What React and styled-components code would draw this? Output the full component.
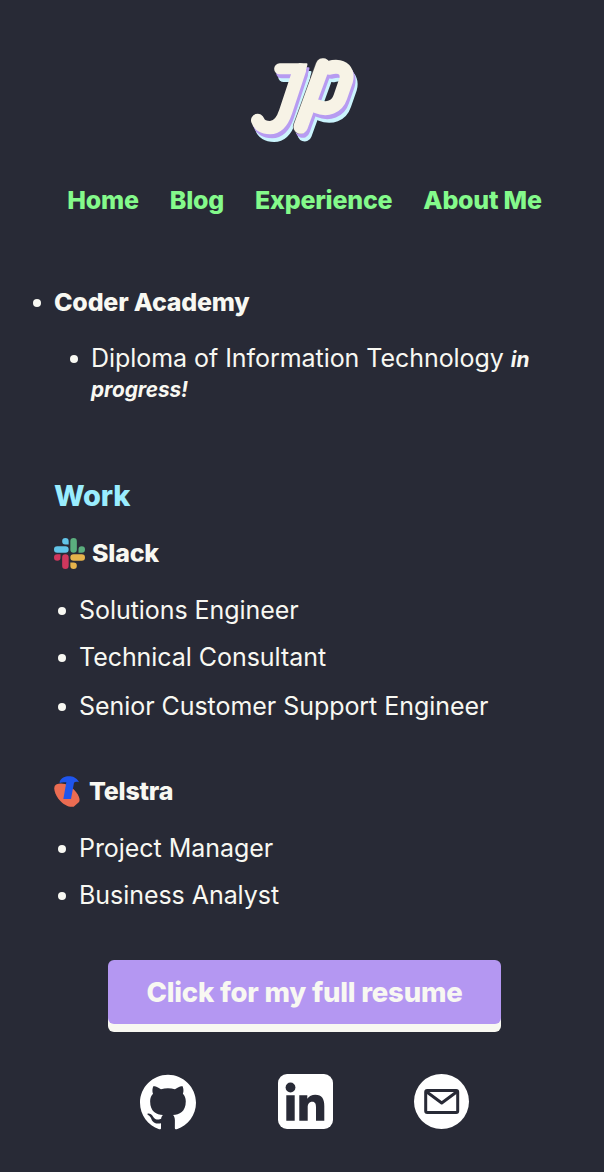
import React from "react";
import styled, { createGlobalStyle, css } from "styled-components";

const colors = {
  background: "#282a36",
  foreground: "#f8f8f2",
  green: "#84fa8b",
  cyan: "#9aedfe",
  purple: "#b497f2",
};

const heavy = css`
  font-weight: 760;
  letter-spacing: -0.22px;
`;

const GlobalStyle = createGlobalStyle`
  * { box-sizing: border-box; }
  body {
    margin: 0;
    background: ${colors.background};
    color: ${colors.foreground};
    font-family: Inter, sans-serif;
    font-size: 25px;
    line-height: 31px;
    letter-spacing: -0.05px;
  }
`;

const Page = styled.div`
  min-height: 1172px;
  display: flex;
  flex-direction: column;
`;

const Header = styled.header`
  display: flex;
  flex-direction: column;
  align-items: center;
  padding: 50px 0 0 5px;
`;

const Logo = styled.svg`
  width: 130px;
  height: 100px;
  display: block;
`;

const Nav = styled.nav`
  display: flex;
  gap: 31px;
  margin-top: 35px;
`;

const NavLink = styled.a`
  ${heavy}
  color: ${colors.green};
  text-decoration: none;
`;

const Main = styled.main`
  padding: 71px 50px 0 54px;
`;

const List = styled.ul`
  list-style: none;
  margin: ${(p) => p.$top || 0}px 0 0;
  padding: 0 0 0 ${(p) => p.$indent || 0}px;
`;

const Item = styled.li`
  margin-top: ${(p) => p.$top || 0}px;

  &::before {
    content: "";
    display: inline-block;
    width: 8px;
    height: 8px;
    margin: 0 13px 0 -21px;
    border-radius: 50%;
    background: currentColor;
    vertical-align: 4px;
  }
`;

const School = styled.strong`
  ${heavy}
`;

const Course = styled(Item)`
  line-height: 30px;
`;

const Status = styled.em`
  font-size: 20.8px;
  line-height: 0;
  font-weight: 750;
`;

const SectionTitle = styled.h2`
  ${heavy}
  margin: 75px 0 0;
  color: ${colors.cyan};
  font-size: 29px;
  line-height: 36px;
`;

const Employer = styled.h3`
  ${heavy}
  display: flex;
  align-items: center;
  gap: ${(p) => p.$gap}px;
  margin: ${(p) => p.$top}px 0 0;
  font-size: 25px;
  line-height: 31px;
`;

const BrandIcon = styled.svg`
  width: ${(p) => p.$width}px;
  height: 31px;
`;

const ResumeButton = styled.button`
  display: block;
  width: 393px;
  height: 64px;
  margin: 49px 0 0 54px;
  padding: 0;
  border: 0;
  border-radius: 6px;
  background: ${colors.purple};
  box-shadow: 0 8px 0 ${colors.foreground};
  color: ${colors.foreground};
  font: 760 27.5px/32px Inter, sans-serif;
  letter-spacing: -0.2px;
`;

const Footer = styled.footer`
  display: flex;
  justify-content: center;
  gap: 81px;
  padding: 50px 0 0 6px;
`;

const SocialLink = styled.a`
  display: flex;
  color: #fff;
`;

const SocialIcon = styled.svg`
  width: 56px;
  height: 56px;
`;

const J_BAR = "M119 56.5H182";
const J_STROKE = "M178 61L137 185C126 218 111 233 90 233C70 233 57 224 53 211";
const P_STEM = "M249 46L182 230";
const P_BOWL = "M268 53C280 50 294 49 303 53C318 59 323 74 318 92L301 141C291 171 262 182 230 169";

function Monogram({ color, dx = 0, dy = 0, outline }) {
  return (
    <g transform={`translate(${dx} ${dy})`} fill="none" strokeLinecap="round">
      <g stroke={color}>
        <path d={J_BAR} strokeWidth="33" />
        <path d={J_STROKE} strokeWidth="40" />
        <path d="M176 40H200Q204 40 202 46L194 72Z" fill={color} stroke="none" />
      </g>
      {outline && <path d={P_STEM} transform="translate(-2 0)" stroke={outline} strokeWidth="43" />}
      <g stroke={color}>
        <path d={P_STEM} strokeWidth="43" />
        <path d={P_BOWL} strokeWidth="42" />
      </g>
    </g>
  );
}

function SlackIcon() {
  return (
    <BrandIcon $width={31} viewBox="0 0 122.8 122.8" aria-hidden="true">
      <path fill="#cf375d" d="M25.8 77.6a12.9 12.9 0 1 1-12.9-12.9h12.9zM32.3 77.6a12.9 12.9 0 0 1 25.8 0v32.3a12.9 12.9 0 0 1-25.8 0z" />
      <path fill="#62c4e8" d="M45.2 25.8a12.9 12.9 0 1 1 12.9-12.9v12.9zM45.2 32.3a12.9 12.9 0 0 1 0 25.8H12.9a12.9 12.9 0 0 1 0-25.8z" />
      <path fill="#5bae7e" d="M97 45.2a12.9 12.9 0 1 1 12.9 12.9H97zM90.5 45.2a12.9 12.9 0 0 1-25.8 0V12.9a12.9 12.9 0 0 1 25.8 0z" />
      <path fill="#e6b34b" d="M77.6 97a12.9 12.9 0 1 1-12.9 12.9V97zM77.6 90.5a12.9 12.9 0 0 1 0-25.8h32.3a12.9 12.9 0 0 1 0 25.8z" />
    </BrandIcon>
  );
}

function TelstraIcon() {
  return (
    <BrandIcon $width={26} viewBox="0 0 78 93" aria-hidden="true">
      <path fill="#eb6c52" d="M8 25C-4 30 0 50 13 68C27 86 46 95 59 92L75 78C82 67 66 42 46 30C32 22 18 21 8 25Z" />
      <path fill="#1f55ed" d="M17 17C22 5 34 0 49 1C61 2 71 9 75 19C69 17 63 17 60 20L51 69H28L37 19C30 18 23 18 17 21Z" />
    </BrandIcon>
  );
}

function GithubIcon() {
  return (
    <SocialIcon viewBox="0 0 24 24" fill="currentColor">
      <path d="M12 .297c-6.63 0-12 5.373-12 12 0 5.303 3.438 9.8 8.205 11.385.6.113.82-.258.82-.577 0-.285-.01-1.04-.015-2.04-3.338.724-4.042-1.61-4.042-1.61C4.422 18.07 3.633 17.7 3.633 17.7c-1.087-.744.084-.729.084-.729 1.205.084 1.838 1.236 1.838 1.236 1.07 1.835 2.809 1.305 3.495.998.108-.776.417-1.305.76-1.605-2.665-.3-5.466-1.332-5.466-5.93 0-1.31.465-2.38 1.235-3.22-.135-.303-.54-1.523.105-3.176 0 0 1.005-.322 3.3 1.23.96-.267 1.98-.399 3-.405 1.02.006 2.04.138 3 .405 2.28-1.552 3.285-1.23 3.285-1.23.645 1.653.24 2.873.12 3.176.765.84 1.23 1.91 1.23 3.22 0 4.61-2.805 5.625-5.475 5.92.42.36.81 1.096.81 2.22 0 1.606-.015 2.896-.015 3.286 0 .315.21.69.825.57C20.565 22.092 24 17.592 24 12.297c0-6.627-5.373-12-12-12" />
    </SocialIcon>
  );
}

function LinkedinIcon() {
  return (
    <SocialIcon viewBox="0 0 56 56">
      <rect x="1" y="0" width="55" height="55" rx="9" fill="currentColor" />
      <g fill={colors.background}>
        <circle cx="13.5" cy="13.5" r="4.9" />
        <path d="M9.3 21.3H17.7V46.7H9.3ZM22.3 21.3H30.3V24.8C32.2 21.9 34.8 20.7 38.2 20.7C45.2 20.7 47.3 25.2 47.3 32V46.7H39V33.5C39 30 38.2 27.8 35.3 27.8C31.9 27.8 30.7 30.3 30.7 33.5V46.7H22.3Z" />
      </g>
    </SocialIcon>
  );
}

function MailIcon() {
  return (
    <SocialIcon viewBox="0 0 56 56">
      <circle cx="27.5" cy="27.5" r="27.5" fill="currentColor" />
      <g fill="none" stroke={colors.background} strokeWidth="3" strokeLinejoin="round">
        <rect x="11.7" y="16.5" width="32" height="22" rx="1.5" />
        <path d="M12.2 17.5L27.7 29L43.2 17.5" />
      </g>
    </SocialIcon>
  );
}

export default function App() {
  return (
    <Page>
      <GlobalStyle />
      <Header>
        <Logo viewBox="0 0 390 300" role="img" aria-label="JP">
          <Monogram color="#cbf4fd" dx={12} dy={23} />
          <Monogram color="#b79bf1" dx={6} dy={12} />
          <Monogram color="#f7f3e6" outline="#55555a" />
        </Logo>
        <Nav>
          <NavLink>Home</NavLink>
          <NavLink>Blog</NavLink>
          <NavLink>Experience</NavLink>
          <NavLink>About Me</NavLink>
        </Nav>
      </Header>
      <Main>
        <List>
          <Item>
            <School>Coder Academy</School>
            <List $top={25} $indent={37}>
              <Course>
                Diploma of Information Technology <Status>in progress!</Status>
              </Course>
            </List>
          </Item>
        </List>
        <SectionTitle>Work</SectionTitle>
        <Employer $top={24} $gap={7}>
          <SlackIcon />
          Slack
        </Employer>
        <List $top={26} $indent={25}>
          <Item>Solutions Engineer</Item>
          <Item $top={16}>Technical Consultant</Item>
          <Item $top={18}>Senior Customer Support Engineer</Item>
        </List>
        <Employer $top={54} $gap={9}>
          <TelstraIcon />
          Telstra
        </Employer>
        <List $top={26} $indent={25}>
          <Item>Project Manager</Item>
          <Item $top={16}>Business Analyst</Item>
        </List>
        <ResumeButton>Click for my full resume</ResumeButton>
      </Main>
      <Footer>
        <SocialLink><GithubIcon /></SocialLink>
        <SocialLink><LinkedinIcon /></SocialLink>
        <SocialLink><MailIcon /></SocialLink>
      </Footer>
    </Page>
  );
}
